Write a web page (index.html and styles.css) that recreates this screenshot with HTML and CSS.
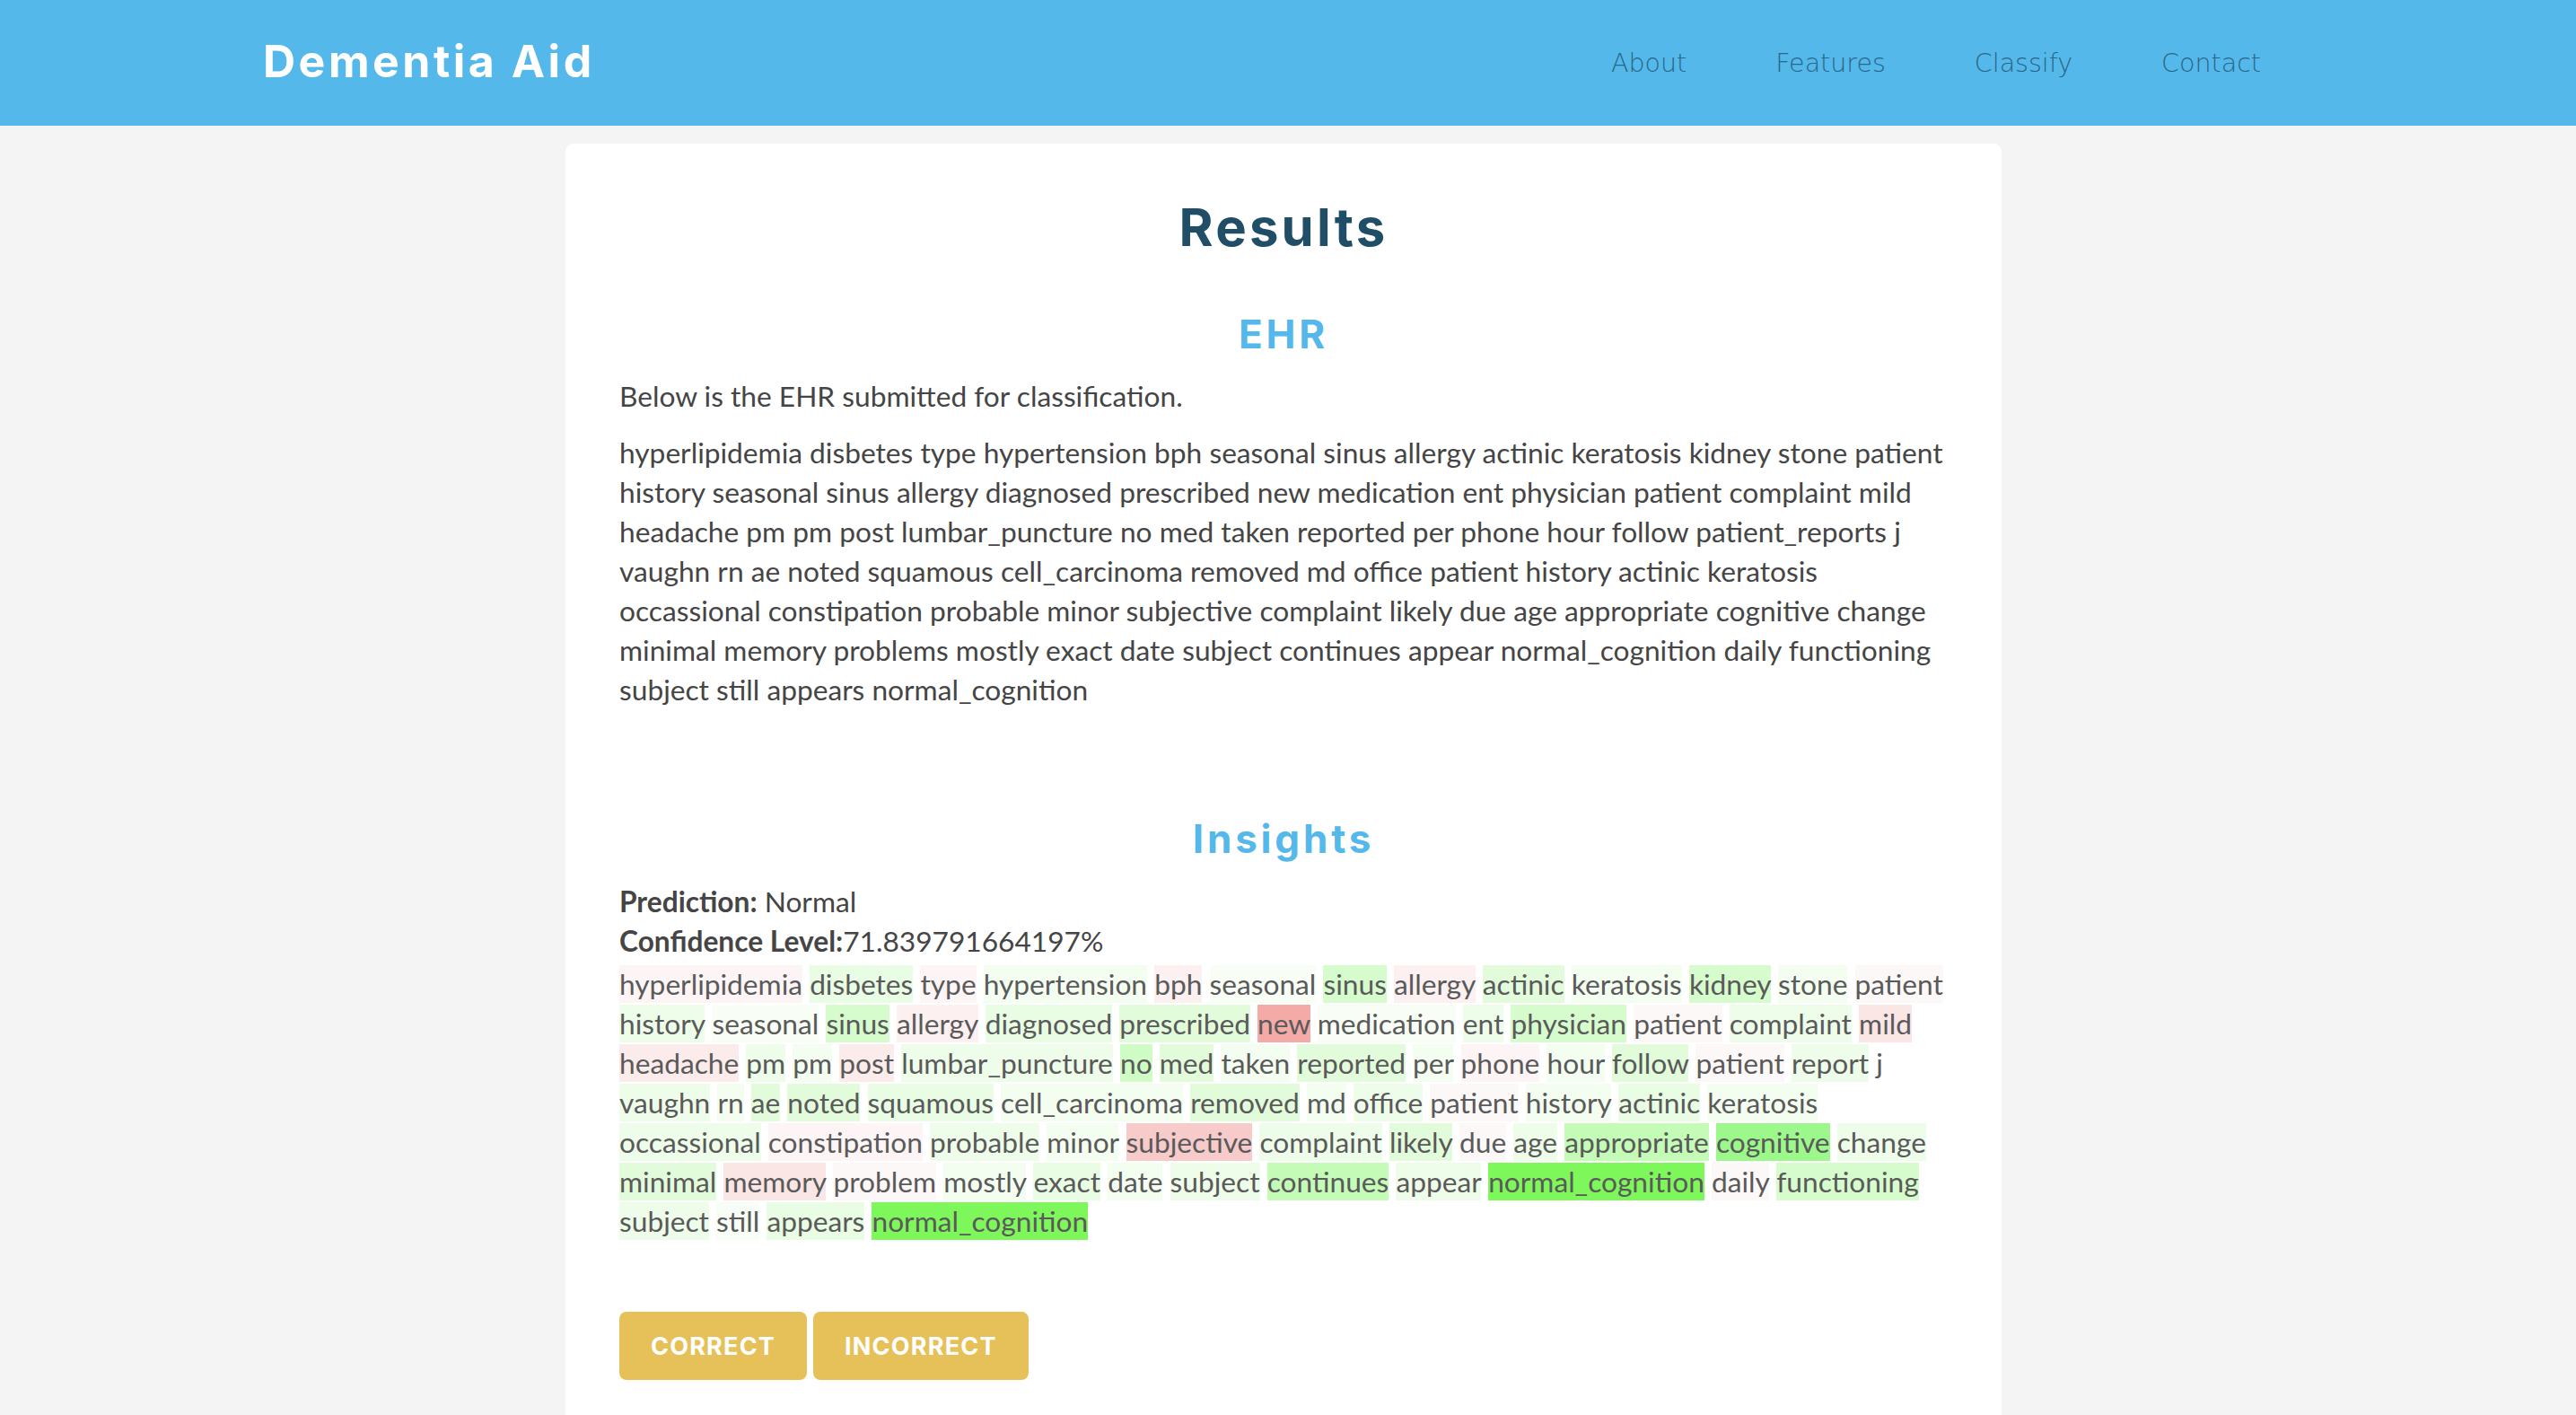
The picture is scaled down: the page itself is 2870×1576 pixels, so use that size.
FILE: index.html
```html
<!DOCTYPE html>
<html lang="en">
<head>
<meta charset="utf-8">
<title>Dementia Aid - Results</title>
<link rel="stylesheet" href="styles.css">
</head>
<body>
<header class="navbar">
  <div class="nav-inner">
    <a class="brand" href="#">Dementia Aid</a>
    <nav class="links">
      <a href="#">About</a>
      <a href="#">Features</a>
      <a href="#">Classify</a>
      <a href="#">Contact</a>
    </nav>
  </div>
</header>
<main class="page">
  <section class="card">
    <h1 class="title">Results</h1>
    <h2 class="section-title">EHR</h2>
    <p class="intro">Below is the EHR submitted for classification.</p>
    <p class="ehr">hyperlipidemia disbetes type hypertension bph seasonal sinus allergy actinic keratosis kidney stone patient history seasonal sinus allergy diagnosed prescribed new medication ent physician patient complaint mild headache pm pm post lumbar_puncture no med taken reported per phone hour follow patient_reports j vaughn rn ae noted squamous cell_carcinoma removed md office patient history actinic keratosis occassional constipation probable minor subjective complaint likely due age appropriate cognitive change minimal memory problems mostly exact date subject continues appear normal_cognition daily functioning subject still appears normal_cognition</p>

    <h2 class="section-title insights-title">Insights</h2>
    <div class="stat"><b>Prediction:</b> Normal</div>
    <div class="stat"><b>Confidence Level:</b>71.839791664197%</div>
    <p class="heat"><span class="p1">hyperlipidemia</span> <span class="g3">disbetes</span> <span class="p1">type</span> <span class="g1">hypertension</span> <span class="p2">bph</span> <span class="g0">seasonal</span> <span class="g5">sinus</span> <span class="p2">allergy</span> <span class="g4">actinic</span> <span class="g1">keratosis</span> <span class="g5">kidney</span> <span class="g1">stone</span> <span class="p0">patient</span> <span class="g2">history</span> <span class="g0">seasonal</span> <span class="g5">sinus</span> <span class="p2">allergy</span> <span class="g3">diagnosed</span> <span class="g4">prescribed</span> <span class="r1">new</span> <span class="g0">medication</span> <span class="g2">ent</span> <span class="g5">physician</span> <span class="p0">patient</span> <span class="g2">complaint</span> <span class="p4">mild</span> <span class="p3">headache</span> <span class="g2">pm</span> <span class="g1">pm</span> <span class="p3">post</span> <span class="g2">lumbar_puncture</span> <span class="g6">no</span> <span class="g4">med</span> <span class="g1">taken</span> <span class="g4">reported</span> <span class="g1">per</span> <span class="p1">phone</span> <span class="g1">hour</span> <span class="g4">follow</span> <span class="p0">patient</span> <span class="g2">report</span> j <span class="g2">vaughn</span> <span class="g1">rn</span> <span class="g4">ae</span> <span class="g4">noted</span> <span class="g3">squamous</span> <span class="g1">cell_carcinoma</span> <span class="g4">removed</span> <span class="g1">md</span> <span class="g2">office</span> <span class="p0">patient</span> <span class="g1">history</span> <span class="g3">actinic</span> <span class="g1">keratosis</span> <span class="g2">occassional</span> <span class="p1">constipation</span> <span class="g2">probable</span> <span class="g1">minor</span> <span class="r2">subjective</span> <span class="g2">complaint</span> <span class="g4">likely</span> <span class="p0">due</span> <span class="g2">age</span> <span class="g7">appropriate</span> <span class="g8">cognitive</span> <span class="g2">change</span> <span class="g4">minimal</span> <span class="p4">memory</span> <span class="p0">problem</span> <span class="g1">mostly</span> <span class="g3">exact</span> <span class="g1">date</span> <span class="g2">subject</span> <span class="g7">continues</span> <span class="g2">appear</span> <span class="g9">normal_cognition</span> <span class="p0">daily</span> <span class="g5">functioning</span> <span class="g2">subject</span> <span class="g0">still</span> <span class="g3">appears</span> <span class="g9">normal_cognition</span></p>

    <div class="actions">
      <button class="btn" type="button">CORRECT</button>
      <button class="btn" type="button">INCORRECT</button>
    </div>
  </section>
</main>
</body>
</html>
```

FILE: styles.css
```css
html, body {
  margin: 0;
  padding: 0;
}

body {
  background: #f4f4f4;
  font-family: Lato, "Noto Sans", sans-serif;
  font-size: 31.7px;
  line-height: 44px;
  color: #454545;
  height: 1576px;
  overflow: hidden;
}

.navbar {
  background: #54b8ea;
  height: 140px;
}

.nav-inner {
  height: 140px;
  display: flex;
  align-items: center;
  justify-content: space-between;
  padding: 0 300px 0 293px;
}

.brand {
  font-family: Inter, "Noto Sans", sans-serif;
  font-weight: 700;
  font-size: 50px;
  color: #ffffff;
  text-decoration: none;
  letter-spacing: 3.5px;
  line-height: 1;
  padding-bottom: 4px;
}

.links {
  display: flex;
  gap: 99px;
  padding-right: 51px;
}

.links a {
  font-family: "DejaVu Sans", sans-serif;
  font-weight: 200;
  font-size: 28.5px;
  color: #2b6788;
  text-decoration: none;
  line-height: 1;
  padding-top: 2px;
}

.page {
  padding: 20px 0 0;
}

.card {
  background: #ffffff;
  width: 1600px;
  box-sizing: border-box;
  margin: 0 0 0 630px;
  border-radius: 9px;
  padding: 53px 60px 80px;
  min-height: 1420px;
}

.title {
  margin: 0;
  text-align: center;
  font-family: Inter, "Noto Sans", sans-serif;
  font-weight: 700;
  font-size: 58px;
  letter-spacing: 3.2px;
  line-height: 80px;
  color: #1f4e66;
}

.section-title {
  margin: 49px 0 0;
  text-align: center;
  font-family: Inter, "Noto Sans", sans-serif;
  font-weight: 700;
  font-size: 44px;
  letter-spacing: 3.8px;
  line-height: 60px;
  color: #54b8ea;
}

.insights-title {
  margin-top: 114px;
}

.intro {
  margin: 17px 0 19px;
}

.ehr {
  margin: 0;
}

.stat {
  margin-top: 0;
}

.insights-title + .stat {
  margin-top: 18px;
}

.stat b {
  font-weight: 700;
  color: #454545;
}

.heat {
  margin: 4px 0 0;
  color: #5a5a5a;
}

.heat span {
  padding: 2px 0;
}

.g0 { background: #f8fef6; }
.g1 { background: #f3fef0; }
.g2 { background: #eefdea; }
.g3 { background: #e8fde3; }
.g4 { background: #e2fcdb; }
.g5 { background: #d6fccd; }
.g6 { background: #cffbc4; }
.g7 { background: #c3fbb7; }
.g8 { background: #9cf88a; }
.g9 { background: #7ef75a; }
.p0 { background: #fdf8f8; }
.p1 { background: #fdf5f5; }
.p2 { background: #fcf0f0; }
.p3 { background: #fbebeb; }
.p4 { background: #fbe6e6; }
.r1 { background: #f4aaa6; }
.r2 { background: #f6cbca; }

.actions {
  margin-top: 79px;
  display: flex;
  gap: 7px;
}

.btn {
  background: #e6c15a;
  border: none;
  border-radius: 8px;
  height: 76px;
  padding: 0 35px;
  color: #ffffff;
  font-family: Inter, "Noto Sans", sans-serif;
  font-weight: 700;
  font-size: 27px;
  letter-spacing: 1.2px;
  cursor: pointer;
}
```
